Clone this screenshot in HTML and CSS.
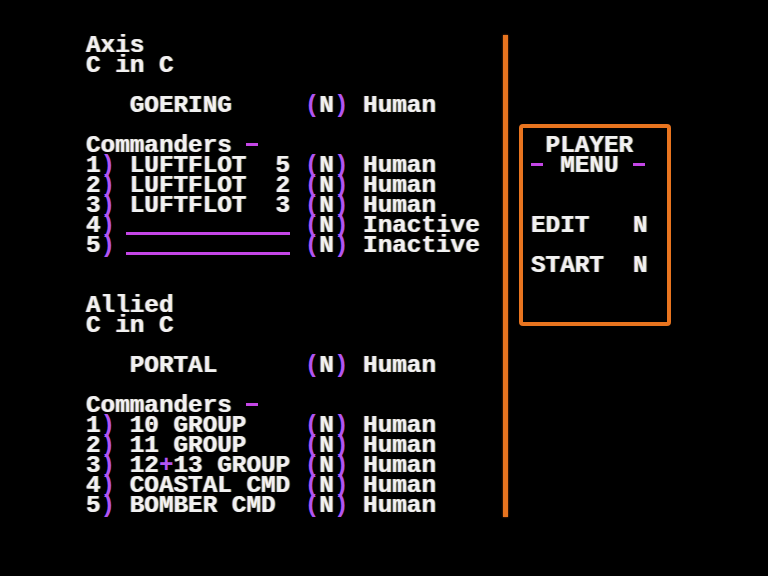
FILE: index.html
```html
<!DOCTYPE html>
<html>
<head>
<meta charset="utf-8">
<link rel="stylesheet" href="styles.css">
</head>
<body>
<div class="screen">
  <div class="left">
    <div class="row">Axis</div>
    <div class="row">C in C</div>
    <div class="row"></div>
    <div class="row">   GOERING     <span class="p">(</span>N<span class="p">)</span> Human</div>
    <div class="row"></div>
    <div class="row">Commanders <span class="dash"></span></div>
    <div class="row">1<span class="p">)</span> LUFTFLOT  5 <span class="p">(</span>N<span class="p">)</span> Human</div>
    <div class="row">2<span class="p">)</span> LUFTFLOT  2 <span class="p">(</span>N<span class="p">)</span> Human</div>
    <div class="row">3<span class="p">)</span> LUFTFLOT  3 <span class="p">(</span>N<span class="p">)</span> Human</div>
    <div class="row">4<span class="p">)</span> <span class="blank"></span> <span class="p">(</span>N<span class="p">)</span> Inactive</div>
    <div class="row">5<span class="p">)</span> <span class="blank"></span> <span class="p">(</span>N<span class="p">)</span> Inactive</div>
    <div class="row"></div>
    <div class="row"></div>
    <div class="row">Allied</div>
    <div class="row">C in C</div>
    <div class="row"></div>
    <div class="row">   PORTAL      <span class="p">(</span>N<span class="p">)</span> Human</div>
    <div class="row"></div>
    <div class="row">Commanders <span class="dash"></span></div>
    <div class="row">1<span class="p">)</span> 10 GROUP    <span class="p">(</span>N<span class="p">)</span> Human</div>
    <div class="row">2<span class="p">)</span> 11 GROUP    <span class="p">(</span>N<span class="p">)</span> Human</div>
    <div class="row">3<span class="p">)</span> 12<span class="p">+</span>13 GROUP <span class="p">(</span>N<span class="p">)</span> Human</div>
    <div class="row">4<span class="p">)</span> COASTAL CMD <span class="p">(</span>N<span class="p">)</span> Human</div>
    <div class="row">5<span class="p">)</span> BOMBER CMD  <span class="p">(</span>N<span class="p">)</span> Human</div>
  </div>
  <div class="vline"></div>
  <div class="right">
    <div class="menu">
      <div class="row"> PLAYER</div>
      <div class="row"><span class="dash"></span> MENU <span class="dash"></span></div>
      <div class="row"></div>
      <div class="row"></div>
      <div class="row">EDIT   N</div>
      <div class="row"></div>
      <div class="row">START  N</div>
    </div>
  </div>
</div>
</body>
</html>
```

FILE: styles.css
```css
html, body {
  margin: 0;
  padding: 0;
  background: #000;
  width: 768px;
  height: 576px;
  overflow: hidden;
}

.screen {
  display: flex;
  margin-left: 86px;
  padding-top: 35px;
  font-family: "Liberation Mono", "DejaVu Sans Mono", monospace;
  font-weight: bold;
  font-size: 24.3px;
  color: #f2f2f2;
  text-shadow: -1px 0 rgba(255, 140, 40, 0.55), 1px 0 rgba(70, 190, 255, 0.55);
}

.left {
  width: 417px;
}

.row {
  height: 20px;
  line-height: 20px;
  white-space: pre;
  padding-top: 1px;
  box-sizing: border-box;
}

.p {
  color: #b255f2;
  text-shadow: none;
}

.dash {
  display: inline-block;
  width: 12px;
  height: 3px;
  background: #c446e6;
  margin-right: calc(1ch - 12px);
  vertical-align: 6px;
}

.blank {
  display: inline-block;
  width: calc(11ch + 4px);
  margin-left: -4px;
  height: 3px;
  background: #c446e6;
  vertical-align: -3px;
}

.vline {
  width: 5px;
  height: 482px;
  background: #e8741f;
  box-shadow: 0 0 2px #a04a10;
}

.right {
  padding-left: 11px;
  padding-top: 89px;
}

.menu {
  width: 136px;
  height: 187px;
  border: 4px solid #e8741f;
  border-radius: 4px;
  padding: 7px 0 0 8px;
  box-sizing: content-box;
}

.menu .row {
  width: 136px;
}
```
